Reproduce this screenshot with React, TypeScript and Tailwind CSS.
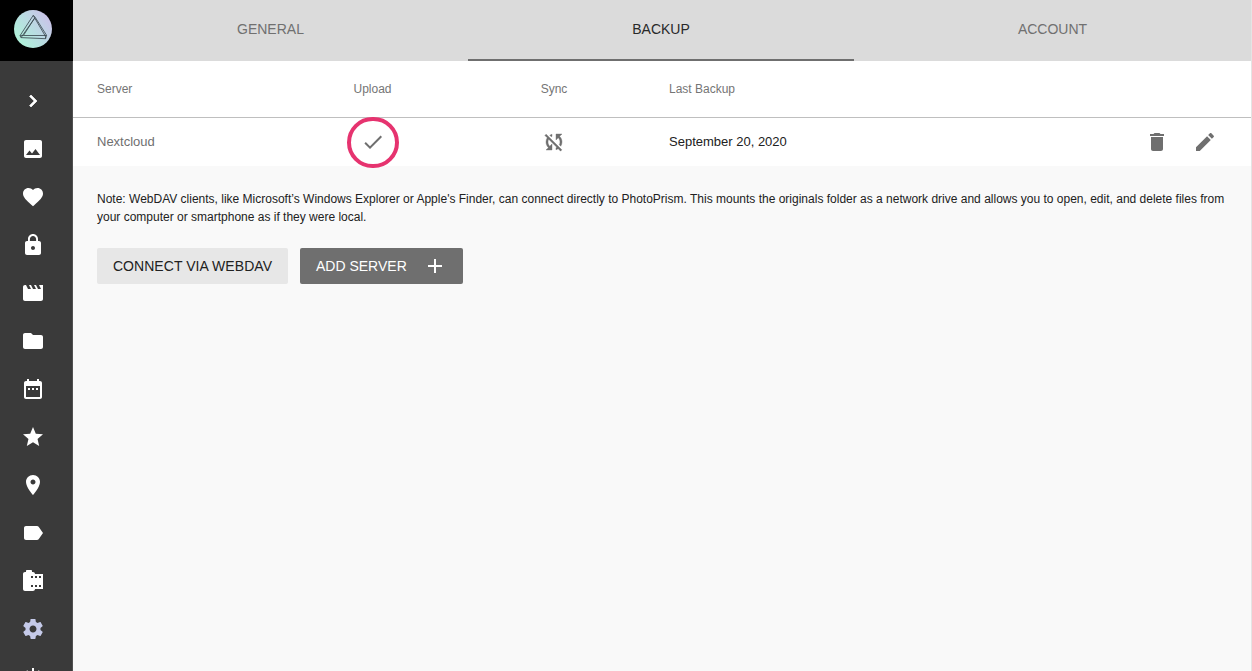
import React from "react";

const paths = {
  chevron: "M10 6L8.59 7.41 13.17 12l-4.58 4.59L10 18l6-6z",
  photo: "M21 19V5c0-1.1-.9-2-2-2H5c-1.1 0-2 .9-2 2v14c0 1.1.9 2 2 2h14c1.1 0 2-.9 2-2zM8.500 13.500l2.500 3.010L14.500 12l4.500 6H5l3.500-4.500z",
  heart: "M12 21.35l-1.450-1.320C5.400 15.360 2 12.280 2 8.500 2 5.420 4.420 3 7.500 3c1.740 0 3.410.810 4.500 2.090C13.090 3.810 14.760 3 16.500 3 19.580 3 22 5.420 22 8.500c0 3.780-3.400 6.860-8.550 11.540L12 21.350z",
  lock: "M18 8h-1V6c0-2.760-2.240-5-5-5S7 3.240 7 6v2H6c-1.100 0-2 .9-2 2v10c0 1.100.9 2 2 2h12c1.100 0 2-.9 2-2V10c0-1.100-.9-2-2-2zm-6 9c-1.100 0-2-.9-2-2s.9-2 2-2 2 .9 2 2-.9 2-2 2zm3.100-9H8.900V6c0-1.710 1.390-3.100 3.100-3.100 1.710 0 3.100 1.390 3.100 3.100v2z",
  movie: "M18 4l2 4h-3l-2-4h-2l2 4h-3l-2-4H8l2 4H7L5 4H4c-1.100 0-1.990.9-1.990 2L2 18c0 1.100.9 2 2 2h16c1.100 0 2-.9 2-2V4h-4z",
  folder: "M10 4H4c-1.100 0-1.990.9-1.990 2L2 18c0 1.100.9 2 2 2h16c1.100 0 2-.9 2-2V8c0-1.100-.9-2-2-2h-8l-2-2z",
  calendar: "M9 11H7v2h2v-2zm4 0h-2v2h2v-2zm4 0h-2v2h2v-2zm2-7h-1V2h-2v2H8V2H6v2H5c-1.110 0-1.990.9-1.990 2L3 20c0 1.100.890 2 2 2h14c1.100 0 2-.9 2-2V6c0-1.100-.9-2-2-2zm0 16H5V9h14v11z",
  star: "M12 17.270L18.180 21l-1.640-7.030L22 9.240l-7.190-.610L12 2 9.190 8.630 2 9.240l5.460 4.730L5.820 21z",
  place: "M12 2C8.130 2 5 5.130 5 9c0 5.250 7 13 7 13s7-7.750 7-13c0-3.870-3.130-7-7-7zm0 9.500c-1.380 0-2.500-1.120-2.500-2.500s1.120-2.500 2.500-2.500 2.500 1.120 2.500 2.500-1.120 2.500-2.500 2.500z",
  label: "M17.630 5.840C17.270 5.330 16.670 5 16 5L5 5.010C3.900 5.010 3 5.900 3 7v10c0 1.100.9 1.990 2 1.990L16 19c.670 0 1.270-.330 1.630-.840L22 12l-4.370-6.160z",
  film: "M14 5c0-1.100-.9-2-2-2h-1V2c0-.550-.450-1-1-1H6c-.550 0-1 .450-1 1v1H4c-1.100 0-2 .9-2 2v15c0 1.100.9 2 2 2h8c1.100 0 2-.9 2-2h8V5h-8zm-2 13h-2v-2h2v2zm0-9h-2V7h2v2zm4 9h-2v-2h2v2zm0-9h-2V7h2v2zm4 9h-2v-2h2v2zm0-9h-2V7h2v2z",
  gear: "M19.430 12.980c.040-.320.070-.640.070-.980s-.030-.660-.070-.980l2.110-1.650c.190-.150.240-.420.120-.640l-2-3.460c-.120-.220-.390-.300-.610-.220l-2.490 1c-.520-.400-1.080-.730-1.690-.980l-.380-2.650C14.460 2.180 14.250 2 14 2h-4c-.250 0-.460.180-.490.420l-.380 2.650c-.610.250-1.170.590-1.690.980l-2.490-1c-.230-.090-.490 0-.610.220l-2 3.460c-.130.220-.070.490.120.640l2.110 1.650c-.040.320-.070.650-.070.980s.030.660.070.980l-2.110 1.650c-.190.150-.240.420-.120.640l2 3.460c.120.220.390.300.610.220l2.490-1c.520.400 1.080.730 1.690.980l.380 2.650c.030.240.240.420.490.420h4c.250 0 .460-.180.490-.420l.380-2.650c.610-.250 1.170-.590 1.690-.980l2.490 1c.230.090.490 0 .610-.220l2-3.460c.120-.220.070-.490-.120-.640l-2.110-1.650zM12 15.500c-1.930 0-3.500-1.570-3.500-3.500s1.570-3.500 3.500-3.500 3.500 1.570 3.500 3.500-1.570 3.500-3.500 3.500z",
  power: "M13 3h-2v10h2V3zm4.830 2.170l-1.420 1.420C17.990 7.860 19 9.810 19 12c0 3.870-3.130 7-7 7s-7-3.130-7-7c0-2.190 1.010-4.140 2.580-5.420L6.170 5.170C4.230 6.820 3 9.260 3 12c0 4.970 4.030 9 9 9s9-4.030 9-9c0-2.740-1.230-5.180-3.170-6.830z",
  check: "M9 16.170L4.830 12l-1.420 1.410L9 19 21 7l-1.410-1.410z",
  syncOff: "M10 6.350V4.260c-.800.210-1.550.540-2.230.960l1.460 1.460c.250-.120.500-.240.770-.330zm-7.140-.940l2.360 2.360C4.450 8.990 4 10.440 4 12c0 2.210.910 4.200 2.360 5.640L4 20h6v-6l-2.240 2.240C6.680 15.150 6 13.660 6 12c0-1 .250-1.940.680-2.770l8.080 8.080c-.250.130-.500.250-.770.340v2.090c.800-.210 1.550-.540 2.230-.960l2.360 2.360 1.270-1.270L4.140 4.140 2.860 5.410zM20 4h-6v6l2.240-2.240C17.320 8.850 18 10.340 18 12c0 1-.250 1.940-.680 2.770l1.460 1.460C19.550 15.010 20 13.560 20 12c0-2.210-.910-4.200-2.360-5.640L20 4z",
  trash: "M6 19c0 1.100.9 2 2 2h8c1.100 0 2-.9 2-2V7H6v12zM19 4h-3.500l-1-1h-5l-1 1H5v2h14V4z",
  pencil: "M3 17.250V21h3.750L17.810 9.940l-3.750-3.750L3 17.250zM20.710 7.040c.390-.390.390-1.020 0-1.410l-2.340-2.340c-.390-.390-1.020-.390-1.410 0l-1.830 1.830 3.750 3.750 1.830-1.830z",
  plus: "M19 13h-6v6h-2v-6H5v-2h6V5h2v6h6v2z",
};

type IconName = keyof typeof paths;

function Icon({ name, className = "size-6" }: { name: IconName; className?: string }) {
  return (
    <svg viewBox="0 0 24 24" fill="currentColor" className={`block shrink-0 ${className}`} aria-hidden="true">
      <path d={paths[name]} />
    </svg>
  );
}

function Logo() {
  return (
    <svg viewBox="0 0 38 38" className="size-[38px]" aria-hidden="true">
      <defs>
        <linearGradient id="disc" x1="0.1" y1="0.8" x2="0.9" y2="0.2">
          <stop offset="0" stopColor="#b0f2da" />
          <stop offset="0.5" stopColor="#b9dce2" />
          <stop offset="1" stopColor="#cac4e8" />
        </linearGradient>
      </defs>
      <circle cx="19" cy="19" r="19" fill="url(#disc)" />
      <g fill="none" stroke="#35434a" strokeWidth="0.8" strokeLinejoin="round">
        <path d="M19.200 5.400 6 25.700 7 27.600 31.600 28.700 32.500 25.200 20.800 6.700Z" />
        <path d="M20.600 8.200 9.400 25.500H32.500M19.200 5.400 31.400 26.200 31.600 28.700M7 27.600 20.600 8.200M6 25.700 9.400 25.500" />
      </g>
    </svg>
  );
}

const nav: IconName[] = ["chevron", "photo", "heart", "lock", "movie", "folder", "calendar", "star", "place", "label", "film", "gear", "power"];

export default function App() {
  return (
    <div className="flex h-[671px] w-[1252px] overflow-hidden bg-[#f9f9f9] font-['Liberation_Sans',Arial,sans-serif] text-[#212121]">
      <aside className="flex w-[73px] shrink-0 flex-col border-r border-[#505050] bg-[#3a3a3a] text-white">
        <div className="-mr-px flex h-[61px] shrink-0 items-start bg-black pt-2.5 pl-3.5">
          <Logo />
        </div>
        <nav className="flex flex-col pt-4">
          {nav.map((name) => (
            <button key={name} className={`flex h-12 w-[66px] shrink-0 items-center justify-center ${name === "gear" ? "text-[#c5cae9]" : ""}`}>
              <Icon name={name} className={name === "chevron" ? "size-6 stroke-current stroke-[0.7] [stroke-linejoin:round]" : "size-6"} />
            </button>
          ))}
        </nav>
      </aside>

      <main className="flex min-w-0 flex-1 flex-col border-r border-[#e4e4e4]">
        <div className="grid h-[61px] shrink-0 grid-cols-[395px_386px_397px] bg-[#dbdbdb] text-sm text-[#707070]">
          <button className="pb-[3px]">GENERAL</button>
          <button className="border-b-2 border-[#6f6f6f] pb-px text-[#292929]">BACKUP</button>
          <button className="pb-[3px]">ACCOUNT</button>
        </div>

        <div className="grid h-[57px] shrink-0 grid-cols-[185px_181px_182px_1fr] items-center border-b border-[#bfbfbf] bg-white pl-6 text-xs text-[#757575]">
          <span>Server</span>
          <span className="text-center">Upload</span>
          <span className="text-center">Sync</span>
          <span className="pl-6">Last Backup</span>
        </div>

        <div className="grid h-12 shrink-0 grid-cols-[185px_181px_182px_1fr_auto] items-center bg-white pr-[34px] pl-6 text-[13px] text-[#6f6f6f]">
          <span>Nextcloud</span>
          <span className="-my-1 flex justify-center">
            <span className="z-10 flex h-[51px] w-[52px] items-center justify-center rounded-full border-4 border-[#e6336f]">
              <Icon name="check" />
            </span>
          </span>
          <span className="flex justify-center">
            <Icon name="syncOff" className="size-6 stroke-current stroke-[0.4]" />
          </span>
          <span className="pl-6 text-[#212121]">September 20, 2020</span>
          <span className="flex gap-6">
            <Icon name="trash" />
            <Icon name="pencil" />
          </span>
        </div>

        <section className="px-6 pt-6">
          <p className="text-xs leading-[18px]">
            Note: WebDAV clients, like Microsoft’s Windows Explorer or Apple's Finder, can connect directly to PhotoPrism. This mounts the originals folder as a network drive and allows you to open, edit, and delete files from your computer or smartphone as if they were local.
          </p>
          <div className="mt-[22px] flex gap-3 text-sm">
            <button className="h-9 w-[191px] rounded-[2px] bg-[#e7e7e7] tracking-[0.05px]">CONNECT VIA WEBDAV</button>
            <button className="flex h-9 w-[163px] items-center justify-between rounded-[2px] bg-[#6f6f6f] px-4 text-white">
              ADD SERVER
              <Icon name="plus" />
            </button>
          </div>
        </section>
      </main>
    </div>
  );
}
